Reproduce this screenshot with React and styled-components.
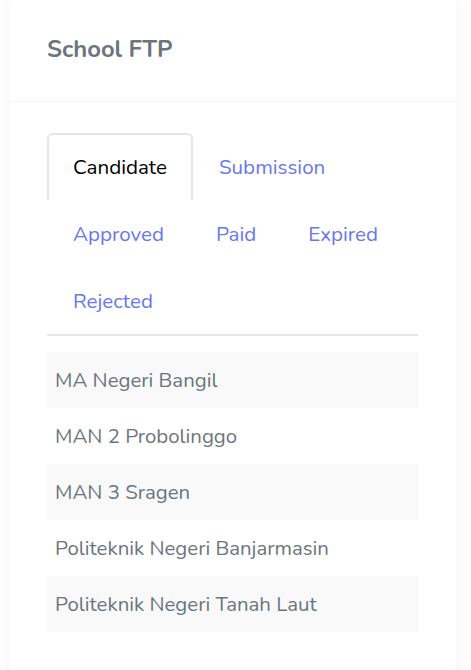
import React, { useState } from "react";
import styled, { createGlobalStyle } from "styled-components";

const Global = createGlobalStyle`
  html, body { margin: 0; padding: 0; background: #fdfdfd; }
  body { font-family: "Nunito", "Lato", "Open Sans", sans-serif; }
`;

const Page = styled.div`
  padding: 0 15px 0 9px;
`;

const Card = styled.div`
  background: #fff;
  border-radius: 3px;
  box-shadow: 0 4px 10px rgba(0, 0, 0, 0.035);
`;

const CardHeader = styled.div`
  height: 102px;
  box-sizing: border-box;
  display: flex;
  align-items: center;
  padding: 0 38px 4px;
  border-bottom: 1px solid #f6f6f6;
`;

const Title = styled.h4`
  margin: 0;
  font-size: 23.8px;
  font-weight: 700;
  color: #6c757d;
`;

const CardBody = styled.div`
  padding: 31px 38px 38px;
`;

const Tabs = styled.ul`
  display: flex;
  flex-wrap: wrap;
  list-style: none;
  margin: 0;
  padding: 0;
  border-bottom: 2px solid #e3e5ea;
`;

const Tab = styled.li`
  padding: 19px 24px;
  line-height: 27px;
  font-size: 20.6px;
  border: 2px solid ${(p) => (p.$active ? "#e3e5ea" : "transparent")};
  border-bottom: none;
  border-radius: 6px 6px 0 0;
  color: ${(p) => (p.$active ? "#000" : "#6777ef")};
  background: #fff;
  cursor: pointer;
`;

const List = styled.ul`
  list-style: none;
  margin: 16px 0 0;
  padding: 0;
`;

const Item = styled.li`
  height: 56px;
  line-height: 56px;
  padding: 0 8px;
  font-size: 20.4px;
  color: #6c757d;
  background: ${(p) => (p.$odd ? "#f9f9f9" : "#fff")};
`;

const tabs = ["Candidate", "Submission", "Approved", "Paid", "Expired", "Rejected"];
const schools = [
  "MA Negeri Bangil",
  "MAN 2 Probolinggo",
  "MAN 3 Sragen",
  "Politeknik Negeri Banjarmasin",
  "Politeknik Negeri Tanah Laut",
];

export default function App() {
  const [active, setActive] = useState(0);
  return (
    <Page>
      <Global />
      <Card>
        <CardHeader>
          <Title>School FTP</Title>
        </CardHeader>
        <CardBody>
          <Tabs>
            {tabs.map((t, i) => (
              <Tab key={t} $active={i === active} onClick={() => setActive(i)}>
                {t}
              </Tab>
            ))}
          </Tabs>
          <List>
            {schools.map((s, i) => (
              <Item key={s} $odd={i % 2 === 0}>
                {s}
              </Item>
            ))}
          </List>
        </CardBody>
      </Card>
    </Page>
  );
}
